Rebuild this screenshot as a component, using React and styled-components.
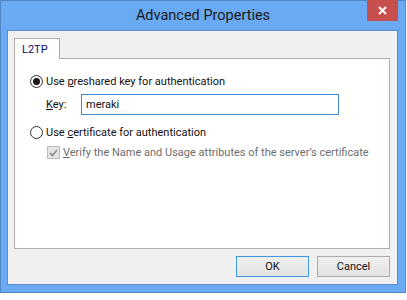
import React from 'react';
import styled, { createGlobalStyle } from 'styled-components';

const Global = createGlobalStyle`
  body {
    margin: 0;
    background: #ffffff;
    font-family: Roboto, "Noto Sans", sans-serif;
  }
`;

const Window = styled.div`
  width: 406px;
  height: 293px;
  box-sizing: border-box;
  background: #6aaaf2;
  border: 1px solid #4f87c9;
  display: flex;
  flex-direction: column;
`;

const TitleBar = styled.div`
  height: 29px;
  flex: none;
  position: relative;
  display: flex;
  align-items: center;
  justify-content: center;
`;

const Title = styled.div`
  font-size: 14.5px;
  color: #1a1a1a;
  margin-top: -1px;
`;

const CloseButton = styled.div`
  position: absolute;
  top: -1px;
  right: 7px;
  width: 31px;
  height: 21px;
  background: #c7504f;
  display: flex;
  align-items: center;
  justify-content: center;
`;

const Body = styled.div`
  flex: 1;
  margin: 0 7px 7px 6px;
  border: 1px solid #5a8fcf;
  background: #f0f0f0;
  padding: 7px 7px 7px 6px;
  display: flex;
  flex-direction: column;
`;

const TabStrip = styled.div`
  display: flex;
  position: relative;
  z-index: 1;
`;

const Tab = styled.div`
  width: 44px;
  height: 20px;
  box-sizing: content-box;
  border: 1px solid #adadad;
  border-bottom: none;
  background: #ffffff;
  margin-bottom: -1px;
  font-size: 11px;
  color: #0c0c70;
  display: flex;
  align-items: flex-start;
  & > span {
    margin: 4px 0 0 7px;
  }
`;

const Panel = styled.div`
  flex: 1;
  border: 1px solid #adadad;
  background: #ffffff;
  padding: 14px 15px;
  display: flex;
  flex-direction: column;
  font-size: 11px;
  color: #111111;
  white-space: nowrap;
`;

const OptionRow = styled.label`
  display: flex;
  align-items: center;
  gap: 3px;
  height: 17px;
  margin-top: ${({ $top }) => $top || 0}px;
  margin-left: ${({ $indent }) => $indent || 0}px;
  color: ${({ $disabled }) => ($disabled ? '#6d6d6d' : '#111111')};
`;

const Radio = styled.span`
  width: 11px;
  height: 11px;
  border-radius: 50%;
  border: 1px solid #333333;
  background: #ffffff;
  display: flex;
  align-items: center;
  justify-content: center;
  flex: none;
  &::after {
    content: '';
    width: 7px;
    height: 7px;
    border-radius: 50%;
    background: ${({ $checked }) => ($checked ? '#1a1a1a' : 'transparent')};
  }
`;

const Check = styled.span`
  width: 11px;
  height: 11px;
  border: 1px solid #bcbcbc;
  background: #e6e6e6;
  display: flex;
  align-items: center;
  justify-content: center;
  flex: none;
`;

const KeyRow = styled.div`
  display: flex;
  align-items: center;
  margin: 4px 0 0 16px;
`;

const KeyLabel = styled.span`
  width: 35px;
`;

const KeyInput = styled.div`
  width: 252px;
  height: 19px;
  border: 1px solid #3c8de0;
  background: #ffffff;
  display: flex;
  align-items: center;
  padding-left: 4px;
  box-sizing: content-box;
`;

const Footer = styled.div`
  display: flex;
  justify-content: flex-end;
  gap: 8px;
  margin-top: 7px;
`;

const Button = styled.div`
  width: 71px;
  height: 19px;
  border: 1px solid ${({ $default }) => ($default ? '#3c97e8' : '#adadad')};
  background: linear-gradient(#efefef, #e3e3e3);
  display: flex;
  align-items: center;
  justify-content: center;
  font-size: 11px;
  color: #111111;
  box-sizing: content-box;
`;

export default function App() {
  return (
    <>
      <Global />
      <Window>
        <TitleBar>
          <Title>Advanced Properties</Title>
          <CloseButton>
            <svg width="9" height="9" viewBox="0 0 9 9">
              <path d="M1 1 L8 8 M8 1 L1 8" stroke="#ffffff" strokeWidth="2" />
            </svg>
          </CloseButton>
        </TitleBar>
        <Body>
          <TabStrip>
            <Tab>
              <span>L2TP</span>
            </Tab>
          </TabStrip>
          <Panel>
            <OptionRow>
              <Radio $checked />
              <span>
                Use <u>p</u>reshared key for authentication
              </span>
            </OptionRow>
            <KeyRow>
              <KeyLabel>
                <u>K</u>ey:
              </KeyLabel>
              <KeyInput>meraki</KeyInput>
            </KeyRow>
            <OptionRow $top={9}>
              <Radio />
              <span>
                Use <u>c</u>ertificate for authentication
              </span>
            </OptionRow>
            <OptionRow $top={3} $indent={17} $disabled>
              <Check>
                <svg width="9" height="8" viewBox="0 0 9 8">
                  <path d="M1 4 L3.5 6.5 L8 1" fill="none" stroke="#8f8f8f" strokeWidth="1.8" />
                </svg>
              </Check>
              <span>
                <u>V</u>erify the Name and Usage attributes of the server’s certificate
              </span>
            </OptionRow>
          </Panel>
          <Footer>
            <Button $default>OK</Button>
            <Button>Cancel</Button>
          </Footer>
        </Body>
      </Window>
    </>
  );
}
